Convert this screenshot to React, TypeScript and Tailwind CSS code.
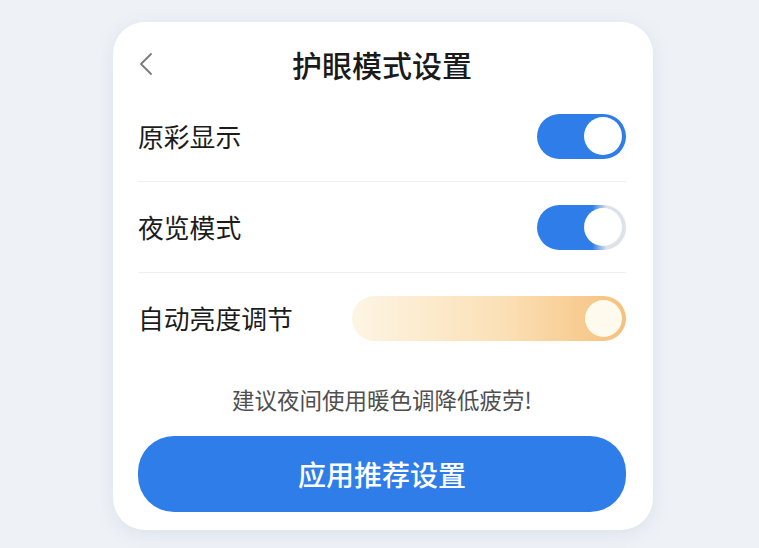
const font = { fontFamily: '"Noto Sans CJK SC", "Noto Sans", sans-serif' }

function Toggle({ dim }: { dim?: boolean }) {
  return (
    <div
      className={
        'w-[89px] h-[45px] rounded-full flex items-center justify-end pr-[4px] ' +
        (dim
          ? 'bg-[linear-gradient(90deg,#2f7de8_62%,#dde1ea_78%)]'
          : 'bg-[#2f7de8]')
      }
    >
      <div className="w-[38px] h-[38px] rounded-full bg-white" />
    </div>
  )
}

function Row({ label, children, divider = true }: { label: string; children: React.ReactNode; divider?: boolean }) {
  return (
    <div className={'h-[91px] flex items-center justify-between ' + (divider ? 'border-b border-[#f0efed]' : '')}>
      <span className="text-[25.8px] text-[#1c1c1c]">{label}</span>
      {children}
    </div>
  )
}

export default function App() {
  return (
    <div className="w-[759px] h-[548px] bg-[#eef2f7] flex pl-[113px] pt-[22px]" style={font}>
      <div className="w-[540px] h-[508px] bg-white rounded-[32px] shadow-[0_4px_18px_rgba(140,155,180,0.18)] pl-[25px] pr-[27px] pt-[20px] pb-[18px] flex flex-col">
        <div className="relative h-[44px] flex items-center justify-center">
          <svg className="absolute left-[1px] top-[10px]" width="14" height="24" viewBox="0 0 14 24" fill="none">
            <polyline points="12,2 2,12 12,22" stroke="#7a7a7a" strokeWidth="1.8" strokeLinecap="round" strokeLinejoin="round" />
          </svg>
          <span className="text-[30px] font-medium text-[#1a1a1a]">护眼模式设置</span>
        </div>
        <div className="mt-[5px]">
          <Row label="原彩显示">
            <Toggle />
          </Row>
          <Row label="夜览模式">
            <Toggle dim />
          </Row>
          <Row label="自动亮度调节" divider={false}>
            <div className="w-[274px] h-[45px] rounded-full bg-[linear-gradient(90deg,#fdf5e4,#fbe0b6_55%,#f6c07c)] flex items-center justify-end pr-[4px]">
              <div className="w-[37px] h-[37px] rounded-full bg-[#fefbee]" />
            </div>
          </Row>
        </div>
        <p className="mt-[21px] text-center text-[22.5px] leading-[28px] text-[#4f4f4f]">建议夜间使用暖色调降低疲劳!</p>
        <button className="mt-[23px] h-[77px] w-full rounded-[36px] bg-[#2f7de8] text-white text-[28px] font-medium">
          应用推荐设置
        </button>
      </div>
    </div>
  )
}
